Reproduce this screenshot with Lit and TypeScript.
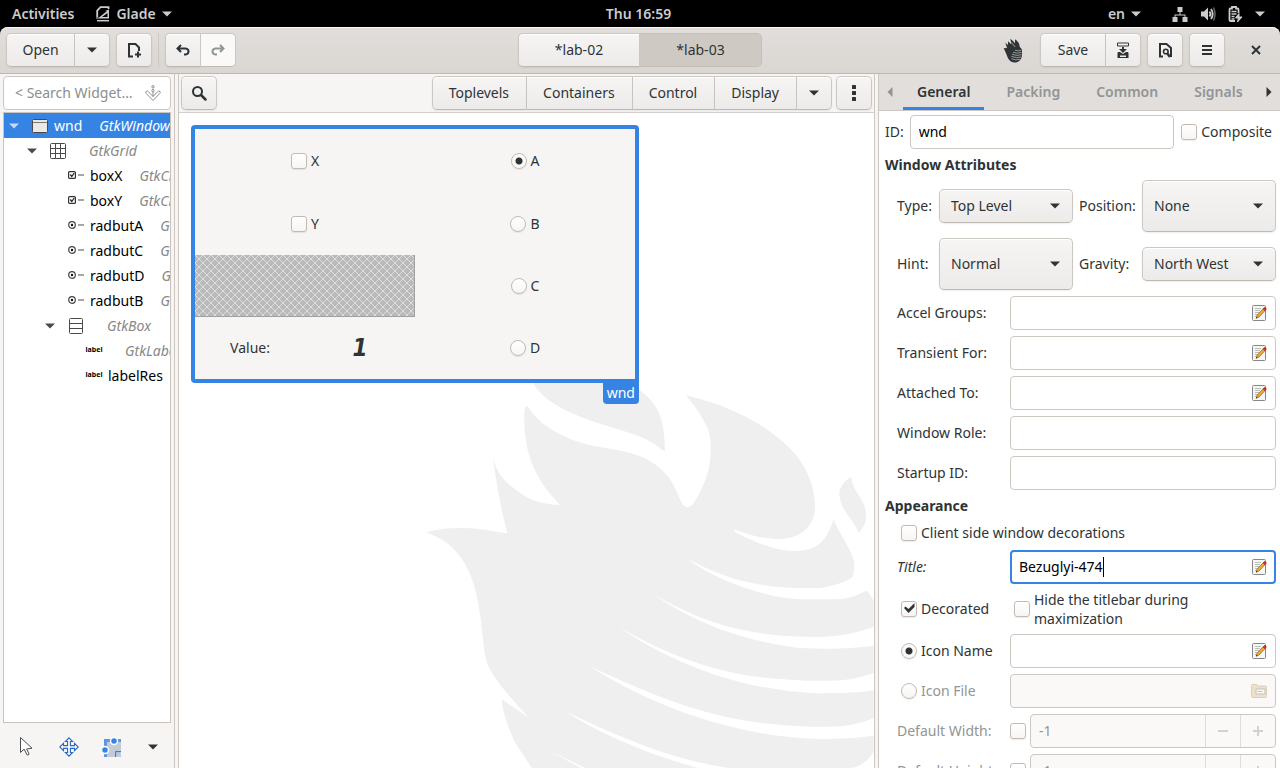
import { LitElement, html, svg, css, nothing } from "lit";
import { customElement, state } from "lit/decorators.js";
import { classMap } from "lit/directives/class-map.js";

const caret = html`<svg class="caret-icon" width="10" height="6" viewBox="0 0 10 6"><path d="M0 .5h10L5 5.5z" fill="currentColor" /></svg>`;

const birdOutline = svg`
  <path d="M82 488C110 476 150 474 190 474C250 474 290 487 324 490C305 415 290 340 281 260C290 300 305 325 340 352C385 390 420 402 482 405C430 350 375 280 375 150C375 120 376 108 383 107C388 110 395 130 430 160C490 205 540 220 600 231C680 243 760 256 810 325C835 362 840 390 852 406Q864 417 878 406C890 392 905 362 920 325C932 290 934 260 934 230C933 200 930 185 920 165C905 135 885 105 863 80Q862 76 866 77C1000 110 1110 165 1190 255C1230 305 1247 360 1247 410C1246 470 1205 506 1137 507C1090 506 1050 495 1006 479Q1001 481 1006 485C1080 525 1140 543 1190 543C1260 542 1285 505 1303 447C1315 485 1363 545 1364 580C1365 605 1364 615 1355 625C1330 640 1290 650 1265 654C1100 656 1000 640 868 568C930 620 1080 680 1190 687C1230 689 1310 688 1335 686C1360 682 1385 668 1404 662Q1410 670 1423 692L1423 770C1330 805 1250 802 1180 799C1020 790 900 755 753 667C900 770 1050 815 1200 834C1280 838 1360 836 1423 827L1423 909C1350 935 1300 933 1220 932C1000 925 850 880 656 770C850 900 1050 960 1250 970C1330 970 1380 968 1423 961L1423 1044C1360 1070 1320 1071 1230 1070C1000 1062 850 1020 571 889C800 1035 1050 1100 1250 1107C1330 1107 1380 1103 1423 1097L1423 1145C1400 1180 1380 1190 1355 1194L985 1194C820 1165 700 1120 500 1025C600 1090 740 1150 895 1194L558 1194L445 1140L545 1194L397 1194C370 1150 350 1130 335 1090C318 1050 308 1010 307 988Q340 1010 390 1045C340 990 290 935 268 890C245 835 255 760 225 650C200 560 150 510 82 488Z" />
  <path d="M402 40C430 90 490 120 560 147C650 180 720 190 770 225Q785 238 797 244C796 160 785 105 717 58L717 0L402 0Z" />
  <path d="M1356 320C1330 335 1320 355 1320 372C1322 420 1360 445 1378 488C1395 470 1402 455 1400 430C1396 380 1360 370 1356 320Z" />
`;

const editIcon = html`<svg width="16" height="16" viewBox="0 0 16 16">
  <rect x="1.500" y=".5" width="13" height="15" rx="1" fill="#f6f6f5" stroke="#85878a" />
  <path d="M4 3.500h6M4 5.500h5M4 7.500h4M4 9.500h2.500M4 11.500h1.500" stroke="#bcbebb" />
  <path d="M5.200 13l.9-2.800 6-6.400 1.900 1.800-6 6.400z" fill="#f4a932" stroke="#8a5a14" stroke-width=".7" />
  <path d="M12.100 3.800l1-1.100q.8-.5 1.600.2t.3 1.600l-1 1.100z" fill="#dc2a20" stroke="#a41510" stroke-width=".6" />
  <path d="M4.900 13.500l.5-1.600 1.100 1z" fill="#222" />
</svg>`;

const folderIcon = html`<svg width="16" height="16" viewBox="0 0 16 16">
  <path d="M.5 2.500q0-1 1-1H6l1 1.500h7.500q1 0 1 1v9.500q0 1-1 1h-13q-1 0-1-1z" fill="#ece0cb" stroke="#ddd0b9" />
  <path d="M5 6h9v5H5z" fill="#faf9f8" stroke="#c4c1bb" />
  <path d="M6.500 8.500h5" stroke="#c4c1bb" />
</svg>`;

const treeIcons: Record<string, unknown> = {
  window: svg`<rect x=".5" y="1.500" width="15" height="13" rx="1" fill="#e9e9e8" stroke="#4a4a4a"/><path d="M1 4.500h14" stroke="#777"/>`,
  grid: svg`<path d="M.5 1.500q0-1 1-1h13q1 0 1 1v13q0 1-1 1h-13q-1 0-1-1zM5.500.5v15M10.500.5v15M.5 5.500h15M.5 10.500h15" fill="none" stroke="#4a4a4a"/>`,
  box: svg`<path d="M1.500 1.500q0-1 1-1h11q1 0 1 1v13q0 1-1 1h-11q-1 0-1-1zM1.500 5.500h13M1.500 10.500h13" fill="none" stroke="#4a4a4a"/>`,
  check: svg`<rect x=".6" y="3.600" width="6.800" height="6.800" rx="1" fill="#fff" stroke="#333" stroke-width="1.200"/><path d="M2.300 6.500l1.500 2 2.400-3.500" fill="none" stroke="#222" stroke-width="1.300"/><path d="M10 7h6" stroke="#888" stroke-width="1.500"/>`,
  radio: svg`<circle cx="4" cy="7" r="3.300" fill="#fff" stroke="#444" stroke-width="1.200"/><circle cx="4" cy="7" r="1.200" fill="#111"/><path d="M10 7h6" stroke="#888" stroke-width="1.500"/>`,
  label: svg`<text x="8" y="9" text-anchor="middle" class="tiny">label</text>`,
};

interface TreeNode {
  level: number;
  icon: string;
  name: string;
  type: string;
  open?: boolean;
}

const nodes: TreeNode[] = [
  { level: 0, icon: "window", name: "wnd", type: "GtkWindow", open: true },
  { level: 1, icon: "grid", name: "", type: "GtkGrid", open: true },
  { level: 2, icon: "check", name: "boxX", type: "GtkCheckButton" },
  { level: 2, icon: "check", name: "boxY", type: "GtkCheckButton" },
  { level: 2, icon: "radio", name: "radbutA", type: "GtkRadioButton" },
  { level: 2, icon: "radio", name: "radbutC", type: "GtkRadioButton" },
  { level: 2, icon: "radio", name: "radbutD", type: "GtkRadioButton" },
  { level: 2, icon: "radio", name: "radbutB", type: "GtkRadioButton" },
  { level: 2, icon: "box", name: "", type: "GtkBox", open: true },
  { level: 3, icon: "label", name: "", type: "GtkLabel" },
  { level: 3, icon: "label", name: "labelRes", type: "GtkLabel" },
];

const shared = css`
  * {
    box-sizing: border-box;
  }
  svg {
    display: block;
    flex: none;
  }
  button,
  input,
  select {
    font: inherit;
    color: inherit;
    margin: 0;
  }
  .btn,
  .combo {
    height: 34px;
    border: 1px solid #cdc7c2;
    border-bottom-color: #bfb8b1;
    border-radius: 5px;
    background: linear-gradient(#f6f5f4, #edebe9);
    box-shadow: inset 0 1px #fff, 0 1px 2px rgba(0, 0, 0, 0.07);
    color: #2e3436;
  }
  .btn {
    display: flex;
    align-items: center;
    justify-content: center;
    padding: 0;
    white-space: nowrap;
  }
  .icon-btn {
    width: 36px;
  }
  .group {
    display: flex;
  }
  .group .btn:not(:first-child) {
    border-top-left-radius: 0;
    border-bottom-left-radius: 0;
    border-left: 0;
  }
  .group .btn:not(:last-child) {
    border-top-right-radius: 0;
    border-bottom-right-radius: 0;
  }
  .group .icon-btn:not(:first-child) {
    width: 35px;
  }
  .check {
    display: flex;
    align-items: center;
    gap: 4px;
  }
  .check input,
  .lone {
    appearance: none;
    flex: none;
    width: 16px;
    height: 16px;
    border: 1px solid #c3bbb3;
    border-radius: 3px;
    background: linear-gradient(#fff, #f6f5f4);
    box-shadow: 0 1px 1px rgba(0, 0, 0, 0.08);
  }
  .check input[type="radio"] {
    border-radius: 50%;
  }
  .check input[type="radio"]:checked {
    background: radial-gradient(circle, #2e3436 0 3px, #fbfafa 4px);
  }
  .check input[type="checkbox"]:checked {
    background: url("data:image/svg+xml,%3Csvg xmlns='http://www.w3.org/2000/svg' viewBox='0 0 14 14'%3E%3Cpath d='M2 6l1.500-1.500L6.500 7 12.500 1v4L6.500 11z' fill='%232e3436'/%3E%3C/svg%3E") center / 14px, linear-gradient(#fff, #f6f5f4);
  }
  .entry {
    display: flex;
    align-items: center;
    height: 34px;
    min-width: 0;
    padding: 0 8px;
    border: 1px solid #cdc7c2;
    border-radius: 4px;
    background: #fff;
    color: #000;
  }
  .entry input {
    flex: 1;
    min-width: 0;
    padding: 0;
    border: 0;
    outline: 0;
    background: none;
  }
`;

@customElement("widget-tree")
export class WidgetTree extends LitElement {
  static styles = [
    shared,
    css`
      :host {
        display: flex;
        flex-direction: column;
        gap: 2px;
        padding: 2px 3px 0;
        min-height: 0;
      }
      .search {
        padding: 0 9px 0 11px;
        gap: 6px;
        color: #8b8e8f;
      }
      .search input::placeholder {
        color: #8b8e8f;
        opacity: 1;
      }
      .search input {
        text-overflow: ellipsis;
      }
      .tree {
        flex: 1;
        min-height: 0;
        margin: 0;
        padding: 0;
        overflow: hidden;
        list-style: none;
        border: 1px solid #c9c3bc;
        background: #fff;
      }
      .row {
        display: flex;
        align-items: center;
        height: 25px;
        white-space: nowrap;
        color: #000;
      }
      .l0 { padding-left: 5px; }
      .l1 { padding-left: 23px; }
      .l2 { padding-left: 41px; }
      .l3 { padding-left: 59px; }
      .expander {
        flex: none;
        width: 10px;
        margin-right: 13px;
        color: #4a4a4a;
      }
      .name {
        margin: 0 17px 0 6px;
      }
      .type {
        font-style: italic;
        color: #888;
      }
      .selected,
      .selected .type {
        background: #3584e4;
        color: #fff;
      }
      .selected .expander {
        color: #c2daf7;
      }
      .tiny {
        font: 700 7px "Noto Sans", sans-serif;
      }
      .glyph {
        overflow: visible;
      }
      .tools {
        display: flex;
        align-items: center;
        gap: 23px;
        height: 43px;
        padding: 0 13px;
      }
      .tool {
        display: flex;
        padding: 0;
        border: 0;
        background: none;
        color: #2e3436;
      }
      .more {
        margin-left: auto;
      }
    `,
  ];

  render() {
    return html`
      <div class="entry search">
        <input type="text" aria-label="Search widgets" placeholder="&lt; Search Widgets &gt;" />
        <svg width="16" height="16" viewBox="0 0 16 16" fill="none" stroke="#8b8e8f">
          <circle cx="8" cy="1.800" r="1.200" /><circle cx="8" cy="5.500" r="1.200" />
          <path d="M8 7v4.500M1 6.500q1.500-1 2.500.3L8 11.500l4.500-4.700q1-1.300 2.500-.3.700 1-.3 2L8 15.500l-6.700-7q-1-1-.3-2z" />
        </svg>
      </div>
      <ul class="tree" role="tree">
        ${nodes.map(
          (n, i) => html`<li role="treeitem" class="row l${n.level} ${i === 0 ? "selected" : ""}">
            <span class="expander">${n.open ? caret : nothing}</span>
            <svg class="glyph" width="16" height="16" viewBox="0 0 16 16">${treeIcons[n.icon]}</svg>
            <span class="name">${n.name}</span><span class="type">${n.type}</span>
          </li>`
        )}
      </ul>
      <div class="tools">
        <button class="tool" aria-label="Select widgets">
          <svg width="20" height="22" viewBox="1 0 20 22"><path d="M5.500 1.500v15l3.600-3.400 3 5.900q1.500.4 2-1l-2.500-5 5.400-.8z" fill="#fff" stroke="#4b4f50" /></svg>
        </button>
        <button class="tool" aria-label="Drag and resize">
          <svg width="20" height="20" viewBox="0 0 20 20"><path d="M10 .8l3.600 3.700H11.400v4.100h4.100V6.400L19.200 10l-3.700 3.600v-2.200h-4.100v4.100h2.200L10 19.200l-3.600-3.700h2.200v-4.100H4.500v2.200L.8 10l3.700-3.600v2.200h4.100V4.500H6.400z" fill="#fff" stroke="#2768c0" stroke-width="1.100" /></svg>
        </button>
        <button class="tool" aria-label="Edit margins">
          <svg width="20" height="20" viewBox="0 0 20 20">
            <path d="M2 2h17v18H2z" fill="#c3cbd6" /><path d="M3.500 20V3.500H19" fill="none" stroke="#5d97df" stroke-width="3" />
            <path d="M19 14.500h-5.500V20" fill="#a9c3e2" stroke="#5c7896" />
            <circle cx="12" cy="4" r="3.500" fill="#3584e4" stroke="#fff" stroke-width="1.500" /><circle cx="3" cy="13" r="3.500" fill="#3584e4" stroke="#fff" stroke-width="1.500" />
          </svg>
        </button>
        <button class="tool more" aria-label="More tools">${caret}</button>
      </div>
    `;
  }
}

@customElement("design-area")
export class DesignArea extends LitElement {
  static styles = [
    shared,
    css`
      :host {
        display: flex;
        flex-direction: column;
        min-width: 0;
        min-height: 0;
      }
      .bar {
        display: flex;
        gap: 4px;
        height: 39px;
        padding: 2px;
        border-bottom: 1px solid #d5d0cc;
      }
      .bar > :first-child {
        margin-right: auto;
      }
      .palette {
        padding: 0 17px 0 16px;
      }
      .canvas {
        position: relative;
        flex: 1;
        min-height: 0;
        padding: 12px;
        overflow: hidden;
        background: #fff;
      }
      .watermark {
        position: absolute;
        right: 0;
        bottom: 0;
        fill: #efefef;
      }
      .window {
        position: relative;
        display: grid;
        grid-template: 63px 63px 62px 62px / 1fr 1fr;
        width: 448px;
        border: 4px solid #3584e4;
        border-radius: 4px;
        background: #f6f5f4;
      }
      .window > * {
        justify-self: center;
        align-self: center;
      }
      .window > .placeholder {
        justify-self: stretch;
        align-self: stretch;
        border-right: 1px solid #a0a0a0;
        border-bottom: 1px solid #a0a0a0;
        background: #bababa url("data:image/svg+xml,%3Csvg xmlns='http://www.w3.org/2000/svg' width='8' height='8'%3E%3Cpath d='M0 0l8 8M8 0L0 8' stroke='%23dedede'/%3E%3C/svg%3E");
      }
      .window > .result {
        display: grid;
        grid-template-columns: 1fr 1fr;
        align-items: center;
        justify-self: stretch;
        text-align: center;
      }
      .value {
        font: italic 700 24px "DejaVu Sans Condensed", "DejaVu Sans", sans-serif;
      }
      .window > .tag {
        position: absolute;
        top: 100%;
        right: -4px;
        height: 25px;
        padding: 4px 4px 2px;
        border-radius: 0 0 4px 4px;
        background: #3584e4;
        color: #fff;
      }
    `,
  ];

  render() {
    const radio = (name: string, on = false) => html`<label class="check"><input type="radio" name="option" ?checked=${on} />${name}</label>`;
    const box = (name: string) => html`<label class="check"><input type="checkbox" />${name}</label>`;
    return html`
      <div class="bar">
        <button class="btn icon-btn" aria-label="Search">
          <svg width="16" height="16" viewBox="0 0 16 16" fill="none" stroke="#2e3436"><circle cx="6.500" cy="6.500" r="4.500" stroke-width="2" /><path d="M10 10l4.500 4.500" stroke-width="2.500" stroke-linecap="round" /></svg>
        </button>
        <div class="group">
          <button class="btn palette">Toplevels</button>
          <button class="btn palette">Containers</button>
          <button class="btn palette">Control</button>
          <button class="btn palette">Display</button>
          <button class="btn icon-btn" aria-label="More widget groups">${caret}</button>
        </div>
        <button class="btn icon-btn" aria-label="All widgets">
          <svg width="16" height="16" viewBox="0 0 16 16" fill="#2e3436"><rect x="6" width="4" height="4" rx=".5" /><rect x="6" y="6" width="4" height="4" rx=".5" /><rect x="6" y="12" width="4" height="4" rx=".5" /></svg>
        </button>
      </div>
      <div class="canvas">
        <svg class="watermark" width="475" height="398" viewBox="0 0 1423 1194">${birdOutline}</svg>
        <div class="window">
          ${box("X")} ${radio("A", true)} ${box("Y")} ${radio("B")}
          <div class="placeholder"></div>
          ${radio("C")}
          <div class="result"><span>Value:</span><span class="value">1</span></div>
          ${radio("D")}
          <span class="tag">wnd</span>
        </div>
      </div>
    `;
  }
}

@customElement("property-editor")
export class PropertyEditor extends LitElement {
  static styles = [
    shared,
    css`
      :host {
        display: flex;
        flex-direction: column;
        min-height: 0;
        background: #fff;
        overflow: hidden;
      }
      .tabs {
        display: flex;
        flex: none;
        gap: 8px;
        height: 37px;
        padding: 0 8px;
        border-bottom: 1px solid #cdc7c2;
        background: #e1dedb;
      }
      .tab {
        height: 36px;
        padding: 2px 14px 0;
        border: 0;
        border-bottom: 3px solid transparent;
        background: none;
        font-weight: 600;
        color: #929595;
      }
      .tab.active {
        border-color: #3584e4;
        color: #2e3436;
      }
      .arrow {
        padding: 0 2px 0 0;
        border: 0;
        background: none;
        color: #2e3436;
      }
      .arrow:disabled {
        color: #929595;
      }
      .next {
        margin-left: auto;
        padding: 0;
      }
      .page {
        display: flex;
        flex-direction: column;
        gap: 6px;
        padding: 4px 4px 0 6px;
      }
      .page > * {
        flex: none;
      }
      .id {
        display: flex;
        align-items: center;
        gap: 6px;
      }
      .id .entry {
        flex: 1;
      }
      .id .check {
        padding: 0 4px 0 1px;
      }
      h2 {
        margin: 0;
        font-size: 14px;
        line-height: 19px;
        font-weight: 700;
      }
      .combos {
        display: grid;
        grid-template-columns: 36px 1fr 57px 1fr;
        grid-auto-rows: 52px;
        align-items: center;
        gap: 6px;
        padding-left: 12px;
      }
      .combo {
        appearance: none;
        width: 100%;
        padding: 0 11px;
        background: url("data:image/svg+xml,%3Csvg xmlns='http://www.w3.org/2000/svg' viewBox='0 0 10 6'%3E%3Cpath d='M0 .5h10L5 5.5z' fill='%232e3436'/%3E%3C/svg%3E") right 12px center / 10px 6px no-repeat, linear-gradient(#f6f5f4, #edebe9);
      }
      .tall {
        height: 52px;
      }
      .row {
        display: grid;
        grid-template-columns: 107px 1fr;
        align-items: center;
        gap: 6px;
        padding-left: 12px;
      }
      .row .check,
      .wide {
        padding-left: 4px;
      }
      .row .wrap {
        line-height: 19px;
      }
      .wide {
        margin: 0 0 0 12px;
        height: 23px;
      }
      .italic {
        font-style: italic;
      }
      .focused {
        border: 2px solid #3584e4;
        padding: 0 7px;
      }
      .entry.focused input {
        flex: none;
        field-sizing: content;
      }
      .cursor {
        width: 1px;
        height: 20px;
        margin-right: auto;
        background: #000;
      }
      .off,
      .off .entry {
        color: #929595;
      }
      .off .entry {
        background: #faf9f8;
      }
      .spin {
        display: flex;
        align-items: center;
        gap: 4px;
        min-width: 0;
      }
      .spin .entry {
        flex: 1;
        padding-right: 0;
      }
      .step {
        align-self: stretch;
        width: 35px;
        padding: 0;
        border: 0;
        border-left: 1px solid #e0dcd8;
        background: none;
        display: grid;
        place-content: center;
      }
    `,
  ];

  @state() private tab = "General";

  private field(id: string, label: string, editable = true) {
    return html`<div class="row">
      <label for=${id}>${label}</label>
      <div class="entry"><input id=${id} type="text" />${editable ? editIcon : nothing}</div>
    </div>`;
  }

  private spin(id: string, label: string) {
    return html`<div class="row off">
      <label for=${id}>${label}</label>
      <div class="spin">
        <input class="lone" type="checkbox" aria-label="Set ${label}" />
        <div class="entry">
          <input id=${id} type="text" value="-1" disabled />
          <button class="step" disabled aria-label="Decrease"><svg width="10" height="10" stroke="#d3d0cd" stroke-width="2"><path d="M0 5h10" /></svg></button>
          <button class="step" disabled aria-label="Increase"><svg width="10" height="10" stroke="#d3d0cd" stroke-width="2"><path d="M0 5h10M5 0v10" /></svg></button>
        </div>
      </div>
    </div>`;
  }

  render() {
    const tab = (name: string) =>
      html`<button class=${classMap({ tab: true, active: this.tab === name })} @click=${() => (this.tab = name)}>${name}</button>`;
    return html`
      <nav class="tabs">
        <button class="arrow" disabled aria-label="Previous tabs"><svg width="6" height="10" viewBox="0 0 6 10"><path d="M5.500 0v10L.5 5z" fill="currentColor" /></svg></button>
        ${tab("General")} ${tab("Packing")} ${tab("Common")} ${tab("Signals")}
        <button class="arrow next" aria-label="More tabs"><svg width="6" height="10" viewBox="0 0 6 10"><path d="M.5 0v10l5-5z" fill="currentColor" /></svg></button>
      </nav>
      <div class="page">
        <div class="id">
          <label for="wid">ID:</label>
          <div class="entry"><input id="wid" type="text" value="wnd" /></div>
          <label class="check"><input type="checkbox" />Composite</label>
        </div>
        <h2>Window Attributes</h2>
        <div class="combos">
          <label for="type">Type:</label><select id="type" class="combo"><option>Top Level</option><option>Popup</option></select>
          <label for="pos">Position:</label><select id="pos" class="combo tall"><option>None</option><option>Center</option></select>
          <label for="hint">Hint:</label><select id="hint" class="combo tall"><option>Normal</option><option>Dialog</option></select>
          <label for="grav">Gravity:</label><select id="grav" class="combo"><option>North West</option><option>North</option></select>
        </div>
        ${this.field("accel", "Accel Groups:")} ${this.field("transient", "Transient For:")}
        ${this.field("attached", "Attached To:")} ${this.field("role", "Window Role:", false)}
        ${this.field("startup", "Startup ID:", false)}
        <h2>Appearance</h2>
        <label class="check wide"><input type="checkbox" />Client side window decorations</label>
        <div class="row">
          <label for="title" class="italic">Title:</label>
          <div class="entry focused"><input id="title" type="text" value="Bezuglyi-474" /><span class="cursor"></span>${editIcon}</div>
        </div>
        <div class="row">
          <label class="check"><input type="checkbox" checked />Decorated</label>
          <label class="check wrap"><input type="checkbox" /><span>Hide the titlebar during<br />maximization</span></label>
        </div>
        <div class="row">
          <label class="check"><input type="radio" name="icon" checked />Icon Name</label>
          <div class="entry"><input type="text" aria-label="Icon Name" />${editIcon}</div>
        </div>
        <div class="row off">
          <label class="check"><input type="radio" name="icon" />Icon File</label>
          <div class="entry"><input type="text" aria-label="Icon File" disabled />${folderIcon}</div>
        </div>
        ${this.spin("dw", "Default Width:")} ${this.spin("dh", "Default Height:")}
      </div>
    `;
  }
}

@customElement("app-root")
export class AppRoot extends LitElement {
  static styles = [
    shared,
    css`
      :host {
        display: flex;
        flex-direction: column;
        height: 100vh;
        overflow: hidden;
        background: #000;
        color: #2e3436;
        font: 14px/20px "Noto Sans", "Open Sans", sans-serif;
      }
      .panel,
      .header {
        display: grid;
        grid-template-columns: 1fr auto 1fr;
        align-items: center;
        flex: none;
      }
      .panel {
        height: 27px;
        padding: 0 15px 0 12px;
        color: #ccc;
        font-weight: 600;
      }
      .side {
        display: flex;
        align-items: center;
        gap: 6px;
      }
      .end {
        justify-content: flex-end;
      }
      .menu {
        display: flex;
        align-items: center;
        gap: 6px;
        padding: 0;
        border: 0;
        background: none;
      }
      .apps {
        gap: 22px;
      }
      .status {
        gap: 31px;
      }
      .indicators {
        gap: 12px;
      }
      .header {
        height: 47px;
        padding: 0 6px;
        border-bottom: 1px solid #bfb8b1;
        border-radius: 8px 8px 0 0;
        background: linear-gradient(#e1dedb, #dad6d2);
        box-shadow: inset 0 1px #f9f8f8;
      }
      .sep {
        width: 1px;
        height: 34px;
        background: #cdc7c2;
      }
      .open {
        width: 69px;
      }
      .save {
        width: 66px;
      }
      .project {
        width: 122px;
      }
      .on {
        background: #cfc9c3;
        box-shadow: none;
        border-color: #c6bfb8;
      }
      .btn.dim {
        background: #faf9f8;
        box-shadow: none;
        color: #929595;
      }
      .logo {
        margin-right: 11px;
      }
      .close {
        background: none;
        border: 0;
        padding: 0 13px 0 20px;
      }
      .main {
        display: grid;
        grid-template-columns: 174px 5px minmax(0, 1fr) 5px 401px;
        grid-template-rows: minmax(0, 1fr);
        flex: 1;
        min-height: 0;
        background: #f6f5f4;
      }
      .handle {
        border: 1px solid #cdc7c2;
        border-width: 0 1px;
      }
    `,
  ];

  render() {
    return html`
      <header class="panel">
        <div class="side apps">
          <button class="menu">Activities</button>
          <button class="menu">
            <svg width="14" height="16" viewBox="0 0 14 16"><path d="M1.200 11V4.500L4.500 1.200H12.500V3" fill="none" stroke="#ccc" stroke-width="1.800" /><path d="M0 11.500h3l8-6.500H9l4-1.500v9H0zM6 11h5.500V7z" fill="#ccc" fill-rule="evenodd" /><path d="M1 14.700h12" stroke="#ccc" stroke-width="1.500" /></svg>
            Glade ${caret}
          </button>
        </div>
        <span>Thu 16:59</span>
        <div class="side end status">
          <button class="menu">en ${caret}</button>
          <button class="menu indicators" aria-label="System">
            <svg width="16" height="16" viewBox="0 0 16 16" fill="#ccc"><path d="M5.500 1h5v5h-5zM.5 11h5v5h-5zM10.500 11h5v5h-5zM7.500 6h1v3h-1zM2.500 8.500h11v2.500h-1V9.500h-9V11h-1z" /></svg>
            <svg width="16" height="16" viewBox="0 0 16 16"><path d="M1 5.500h3L8 1.500v13l-4-4H1z" fill="#ccc" /><path d="M9.500 5.500q2 2.500 0 5M11 3q3.500 5 0 10" fill="none" stroke="#ccc" stroke-width="1.800" /><path d="M13.500 1.500q3 6.500 0 13" fill="none" stroke="#666" stroke-width="1.500" /></svg>
            <svg width="15" height="16" viewBox="0 0 15 16" fill="none" stroke="#ccc"><path d="M7 15H2.500q-1 0-1-1V3.500q0-1 1-1H4V1h4v1.500h1.500q1 0 1 1V7" stroke-width="1.800" /><path d="M3.500 5.500h5M3.500 8h5M3.500 10.500h3M3.500 13h3" stroke-width="1.300" /><path d="M11 7.500L7.500 12h3L9.500 16l4.500-5h-3z" fill="#ccc" /></svg>
            ${caret}
          </button>
        </div>
      </header>
      <header class="header">
        <div class="side">
          <div class="group">
            <button class="btn open">Open</button>
            <button class="btn icon-btn" aria-label="Recent files">${caret}</button>
          </div>
          <button class="btn icon-btn" aria-label="New project">
            <svg width="16" height="16" viewBox="0 0 16 16" fill="none" stroke="#2e3436" stroke-width="2"><path d="M7 14.500H3V2H9.500l3.500 3.500V9M12 9.500v6M9 12.500h6" /></svg>
          </button>
          <span class="sep"></span>
          <div class="group">
            <button class="btn icon-btn" aria-label="Undo">
              <svg width="16" height="16" viewBox="0 0 16 16" fill="none" stroke="currentColor" stroke-width="2"><path d="M6 3L2.500 6.500 6 10M3 6.500h7.500q3 .3 3 3T10.500 12.500H9" /></svg>
            </button>
            <button class="btn icon-btn dim" disabled aria-label="Redo">
              <svg width="16" height="16" viewBox="0 0 16 16" fill="none" stroke="currentColor" stroke-width="2"><path d="M10 3l3.500 3.500L10 10M13 6.500H5.500q-3 .3-3 3t3 3H7" /></svg>
            </button>
          </div>
        </div>
        <div class="group">
          <button class="btn project">*lab-02</button>
          <button class="btn project on">*lab-03</button>
        </div>
        <div class="side end">
          <svg class="logo" width="20" height="26" viewBox="0 0 60 78" fill="none">
            <path d="M2 34l10-1-5-16 8 7V13l10 9-3-17q12 10 14 14V7q14 8 14 22l6 7q6 32-14 40-18 4-27-12Q10 50 2 34z" fill="#2e3436" />
            <path d="M22 15q10 6 14 15M36 40q10 3 18 0M30 46q14 5 26 0M27 52q16 6 29 1M25 58q17 7 29 2M25 65q12 6 26 2" stroke="#dedad7" stroke-width="1.800" />
          </svg>
          <div class="group">
            <button class="btn save">Save</button>
            <button class="btn icon-btn" aria-label="Save as">
              <svg width="16" height="16" viewBox="0 0 16 16" fill="#2e3436"><path d="M2.500 1h11v3h-11z" fill="none" stroke="#2e3436" /><path d="M7 5h2v2h3L8 11 4 7h3z" /><path d="M3 10h2l3 2 3-2h2l.5 1v5h-11v-5z" /><path d="M5 13.500h6V15H5z" fill="#efedeb" /></svg>
            </button>
          </div>
          <button class="btn icon-btn" aria-label="Preview">
            <svg width="16" height="16" viewBox="0 0 16 16" fill="none" stroke="#2e3436" stroke-width="2"><path d="M6 14.500H3V2h6.500L14 6v8h-1" /><circle cx="8.800" cy="9.500" r="2.300" stroke-width="1.600" /><path d="M10 11l3 4" stroke-width="2.500" /></svg>
          </button>
          <button class="btn icon-btn" aria-label="Menu">
            <svg width="16" height="16" viewBox="0 0 16 16" stroke="#2e3436" stroke-width="2"><path d="M3 4h10M3 8h10M3 12h10" /></svg>
          </button>
          <button class="close" aria-label="Close">
            <svg width="10" height="10" viewBox="0 0 10 10" stroke="#2e3436" stroke-width="2"><path d="M1 1l8 8M9 1L1 9" /></svg>
          </button>
        </div>
      </header>
      <main class="main">
        <widget-tree></widget-tree>
        <div class="handle"></div>
        <design-area></design-area>
        <div class="handle"></div>
        <property-editor></property-editor>
      </main>
    `;
  }
}
